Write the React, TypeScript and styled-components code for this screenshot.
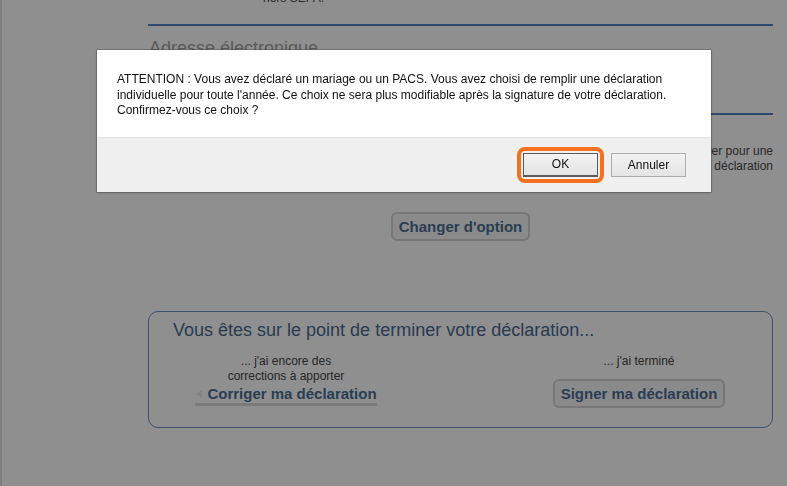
import styled, { createGlobalStyle } from "styled-components";

const GlobalStyle = createGlobalStyle`
  html, body {
    margin: 0;
    padding: 0;
    background: #ffffff;
    font-family: "Liberation Sans", Arial, sans-serif;
  }
  body {
    overflow: hidden;
  }
`;

const App = () => {
  return (
    <>
      <GlobalStyle />
      <Page>
        <Column>
          <TopNote>hors SEPA.</TopNote>
          <Rule />
          <SectionTitle>Adresse électronique</SectionTitle>
          <Rule $gap={54} />
          <RightNote>
            Si vous souhaitez revenir sur votre choix, il vous faut cliquer pour une
            <br />
            imposition commune de votre déclaration
          </RightNote>
          <Center>
            <GreyButton>Changer d'option</GreyButton>
          </Center>

          <FinishBox>
            <FinishTitle>Vous êtes sur le point de terminer votre déclaration...</FinishTitle>
            <Choices>
              <Choice>
                <Hint>
                  ... j'ai encore des
                  <br />
                  corrections à apporter
                </Hint>
                <BackLink href="#">Corriger ma déclaration</BackLink>
              </Choice>
              <Choice>
                <Hint>... j'ai terminé</Hint>
                <GreyButton $gap={10}>Signer ma déclaration</GreyButton>
              </Choice>
            </Choices>
          </FinishBox>
        </Column>
      </Page>

      <Overlay />

      <Dialog role="dialog">
        <Message>
          ATTENTION : Vous avez déclaré un mariage ou un PACS. Vous avez choisi de remplir une déclaration
          individuelle pour toute l'année. Ce choix ne sera plus modifiable après la signature de votre
          déclaration. Confirmez-vous ce choix ?
        </Message>
        <Footer>
          <FocusRing>
            <DialogButton $primary>OK</DialogButton>
          </FocusRing>
          <DialogButton>Annuler</DialogButton>
        </Footer>
      </Dialog>
    </>
  );
};

const Page = styled.div`
  min-height: 486px;
  border-left: 2px solid #e4e4e4;
  overflow: hidden;
`;

const Column = styled.div`
  width: 625px;
  margin-left: 146px;
  display: flex;
  flex-direction: column;
`;

const TopNote = styled.div`
  margin-top: -9px;
  padding-left: 115px;
  font-size: 12px;
  line-height: 15px;
  color: #4a4a4a;
`;

const Rule = styled.div<{ $gap?: number }>`
  margin-top: ${({ $gap }) => $gap ?? 18}px;
  height: 2px;
  background: #5382bd;
`;

const SectionTitle = styled.h2`
  margin: 11px 0 0 1px;
  font-size: 18px;
  line-height: 22px;
  font-weight: normal;
  color: #a2a2a2;
`;

const RightNote = styled.p`
  margin: 29px 0 0;
  font-size: 12px;
  line-height: 15px;
  text-align: right;
  color: #4a4a4a;
`;

const Center = styled.div`
  display: flex;
  justify-content: center;
  margin-top: 38px;
`;

const GreyButton = styled.button<{ $gap?: number }>`
  margin-top: ${({ $gap }) => $gap ?? 0}px;
  height: 29px;
  padding: 0 6px;
  border: 2px solid #d4d4d4;
  border-radius: 6px;
  background: #f6f6f6;
  font-family: "Liberation Sans", Arial, sans-serif;
  font-size: 15px;
  font-weight: bold;
  color: #4c6e95;
  cursor: pointer;
`;

const FinishBox = styled.section`
  margin-top: 70px;
  border: 1px solid #6a8fbb;
  border-radius: 10px;
  padding: 7px 6px 19px 10px;
`;

const FinishTitle = styled.h3`
  margin: 0 0 0 14px;
  font-size: 18px;
  line-height: 22px;
  font-weight: normal;
  color: #4a6a90;
`;

const Choices = styled.div`
  display: flex;
  justify-content: space-between;
  margin-top: 13px;
`;

const Choice = styled.div`
  width: 254px;
  display: flex;
  flex-direction: column;
  align-items: center;
  text-align: center;
`;

const Hint = styled.div`
  font-size: 12px;
  line-height: 15px;
  color: #454545;
`;

const BackLink = styled.a`
  margin-top: 1px;
  display: flex;
  align-items: center;
  gap: 5px;
  padding-left: 1px;
  font-size: 15px;
  line-height: 18px;
  font-weight: bold;
  color: #4c6e95;
  text-decoration: none;
  border-bottom: 3px solid #d9d9d9;

  &::before {
    content: "";
    width: 0;
    height: 0;
    border-top: 4px solid transparent;
    border-bottom: 4px solid transparent;
    border-right: 6px solid #eaeaea;
  }
`;

const Overlay = styled.div`
  position: fixed;
  inset: 0;
  background: rgba(0, 0, 0, 0.44);
  z-index: 1;
`;

const Dialog = styled.div`
  position: fixed;
  left: 97px;
  top: 50px;
  width: 614px;
  z-index: 2;
  background: #ffffff;
  box-shadow: 0 0 0 1px rgba(0, 0, 0, 0.18), 0 1px 3px rgba(0, 0, 0, 0.2);
  display: flex;
  flex-direction: column;
`;

const Message = styled.p`
  margin: 0;
  height: 87px;
  box-sizing: border-box;
  padding: 22px 20px 0;
  font-size: 12px;
  line-height: 15.5px;
  color: #111111;
`;

const Footer = styled.div`
  height: 55px;
  box-sizing: border-box;
  border-top: 1px solid #e2e2e2;
  background: #f0f0f0;
  display: flex;
  align-items: center;
  justify-content: flex-end;
  gap: 7px;
  padding: 0 25px 1px 0;
`;

const FocusRing = styled.span`
  display: flex;
  padding: 2px;
  border: 4px solid #f5701f;
  border-radius: 8px;
`;

const DialogButton = styled.button<{ $primary?: boolean }>`
  width: 75px;
  height: 24px;
  padding: 0;
  border: 1px solid ${({ $primary }) => ($primary ? "#5a5a5a" : "#adadad")};
  border-bottom-width: ${({ $primary }) => ($primary ? 2 : 1)}px;
  background: linear-gradient(#f3f3f3, #e4e4e4);
  font-family: "Liberation Sans", Arial, sans-serif;
  font-size: 12px;
  color: #111111;
  cursor: pointer;
`;

export default App;
